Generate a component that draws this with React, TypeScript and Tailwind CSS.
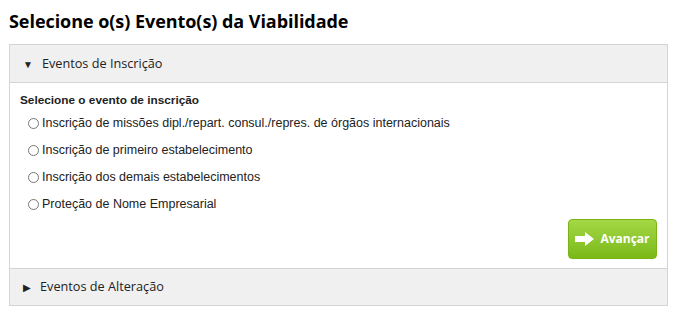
import React, { useState } from 'react';

const eventos = [
    'Inscrição de missões dipl./repart. consul./repres. de órgãos internacionais',
    'Inscrição de primeiro estabelecimento',
    'Inscrição dos demais estabelecimentos',
    'Proteção de Nome Empresarial',
];

const App: React.FC = () => {
    const [selected, setSelected] = useState<number | null>(null);

    return (
        <div className="w-[679px] h-[327px] bg-white pl-[9px] pr-[11px] pt-[9px]">
            <h2 className="text-[18px] font-bold text-black leading-[24px] font-['Open_Sans',sans-serif] tracking-[-0.05px]">
                Selecione o(s) Evento(s) da Viabilidade
            </h2>

            <div className="mt-[11px] border border-[#d4d4d4]">
                <div className="h-[38px] bg-[#f0f0f0] border-b border-[#d4d4d4] flex items-center pl-[13px] gap-[9px] font-['Open_Sans',sans-serif] text-[12.7px] text-[#222]">
                    <span className="text-[10px] leading-none">▼</span>
                    <span>Eventos de Inscrição</span>
                </div>

                <div className="bg-white px-[10px] pt-[10px] pb-[9px] font-['Liberation_Sans',Arial,sans-serif] text-[12.5px] text-[#222]">
                    <p className="font-bold leading-[14px] text-[11.8px]">Selecione o evento de inscrição</p>
                    <div className="flex flex-col gap-[13px] mt-[9px] pl-[8px]">
                        {eventos.map((ev, i) => (
                            <label key={i} className="flex items-center gap-[3px] leading-[14px] cursor-pointer">
                                <input
                                    type="radio"
                                    name="evento"
                                    checked={selected === i}
                                    onChange={() => setSelected(i)}
                                    className="w-[11px] h-[11px] m-0 accent-gray-500"
                                />
                                <span>{ev}</span>
                            </label>
                        ))}
                    </div>
                    <div className="flex justify-end mt-[8px]">
                        <button className="w-[89px] h-[40px] rounded-[4px] border border-[#78b414] bg-gradient-to-b from-[#a4d844] to-[#7ab915] flex items-center justify-center gap-[6px] text-white font-bold text-[12px] font-['Open_Sans',sans-serif]">
                            <svg width="19" height="14" viewBox="0 0 19 14">
                                <path d="M0 4h10V0l9 7-9 7v-4H0z" fill="#fff" />
                            </svg>
                            Avançar
                        </button>
                    </div>
                </div>

                <div className="h-[37px] bg-[#f0f0f0] border-t border-[#d4d4d4] flex items-center pl-[13px] gap-[9px] font-['Open_Sans',sans-serif] text-[12.7px] text-[#222]">
                    <span className="text-[10px] leading-none">▶</span>
                    <span>Eventos de Alteração</span>
                </div>
            </div>
        </div>
    );
};

export default App;
